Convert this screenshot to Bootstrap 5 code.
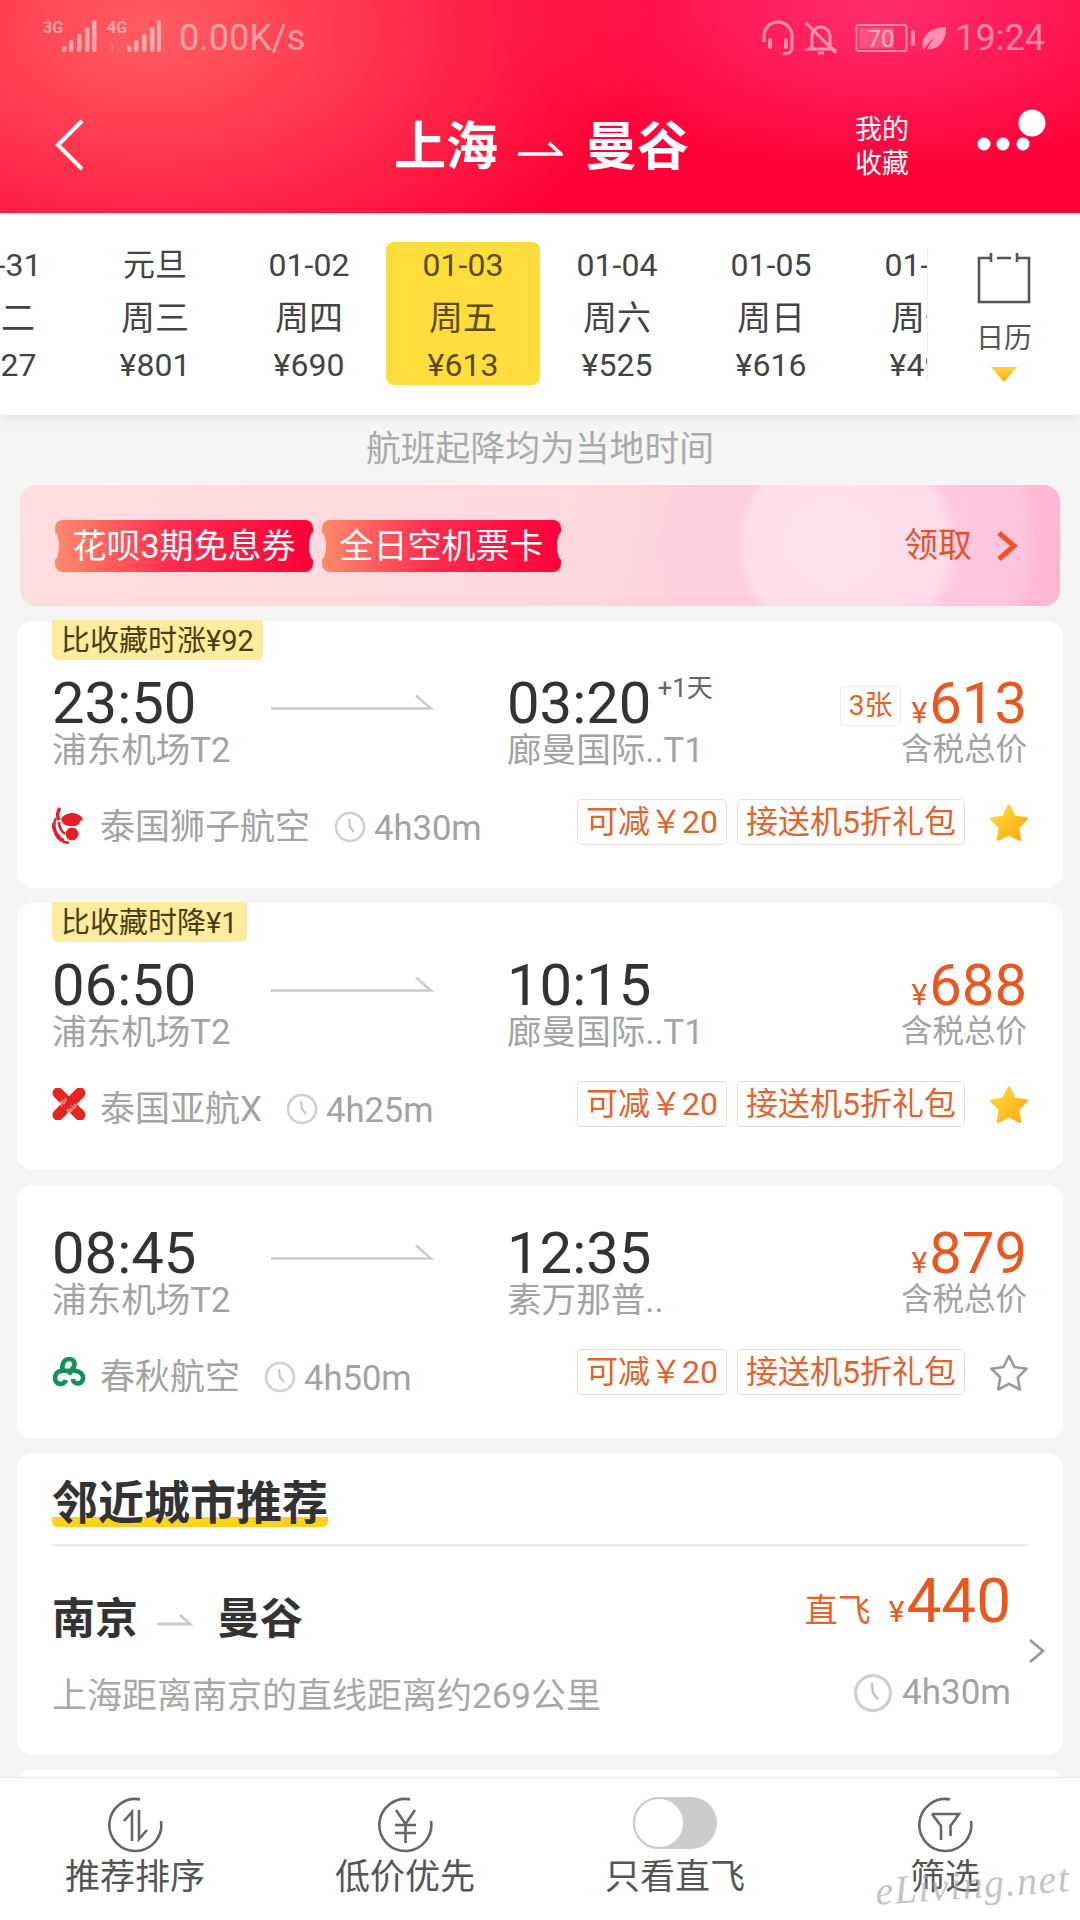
<!DOCTYPE html>
<html lang="zh">
<head>
<meta charset="utf-8">
<meta name="viewport" content="width=device-width, initial-scale=1">
<link rel="stylesheet" href="https://cdn.jsdelivr.net/npm/bootstrap@5.3.3/dist/css/bootstrap.min.css">
<script src="https://cdn.jsdelivr.net/npm/bootstrap@5.3.3/dist/js/bootstrap.bundle.min.js"></script>
<style>
  body { margin: 0; background: #f5f5f5; font-family: Roboto, "Noto Sans CJK SC", sans-serif; }
  svg { display: block; flex-shrink: 0; }

  .app { width: 1080px; height: 1920px; overflow: hidden; position: relative; background: #f5f5f5; }

  /* header */
  .hdr { height: 213px; color: #fff; flex-shrink: 0;
    background:
      radial-gradient(ellipse 500px 300px at 150px 30px, rgba(255,110,105,.85), rgba(255,0,54,0)),
      radial-gradient(ellipse 380px 170px at 880px 10px, rgba(255,50,115,.9), rgba(255,0,54,0)),
      #ff0036; }
  .stat { height: 76px; color: rgba(255,255,255,.48); font-size: 36px; padding: 0 35px 0 43px; }
  .stat-net { margin-left: 18px; }
  .nav-row { height: 137px; }
  .back-ico { margin-left: 55px; }
  .route-title { margin: 6px 0 0 309px; font-size: 52px; font-weight: 700; line-height: 60px; width: 400px; }
  .route-title svg { margin: 0 22px 0 20px; }
  .fav-link { margin: 4px 0 0 60px; font-size: 27px; line-height: 34px; width: 56px; text-align: center; }
  .dots-ico { margin: -14px 0 0 67px; }

  /* date strip */
  .date-bar { height: 202px; background: #fff; position: relative; z-index: 2; flex-shrink: 0;
    box-shadow: 0 5px 10px rgba(0,0,0,.06); }
  .date-scroll { width: 927px; overflow: hidden; padding-top: 29px; }
  .date-col { width: 154px; height: 143px; flex-shrink: 0; text-align: center; color: #444; border-radius: 8px; white-space: nowrap; }
  .date-col:first-child { margin-left: -76px; }
  .date-col.on { background: #ffdd3c; color: #5b4a0c; }
  .d1, .d3 { font-size: 32px; }
  .d1 { line-height: 46px; }
  .d2 { font-size: 34px; line-height: 60px; }
  .d3 { line-height: 34px; }
  .cal-col { width: 153px; height: 132px; margin-top: 35px; border-left: 1px solid #eee; padding-top: 4px; color: #555; }
  .cal-txt { font-size: 28px; line-height: 36px; margin-top: 17px; }
  .cal-tri { width: 26px; height: 15px; margin-top: 10px; flex-shrink: 0; background: linear-gradient(#ffd83a, #ffa514); clip-path: polygon(0 0, 100% 0, 50% 100%); }

  .hint { height: 70px; padding-bottom: 1px; font-size: 34.8px; color: #aaa; flex-shrink: 0; }

  /* promo */
  .promo { height: 121px; margin: 0 20px; padding: 0 42px 0 35px; border-radius: 16px; overflow: hidden; flex-shrink: 0;
    background:
      radial-gradient(circle at 827px 60px, rgba(255,235,245,.75) 0, rgba(255,228,240,.7) 100px, rgba(255,205,228,.6) 112px, rgba(255,205,228,.55) 178px, rgba(255,205,225,0) 190px),
      linear-gradient(100deg, #ffdde0, #ffd8de 55%, #ffc4d8 85%, #ffb6d2); }
  .chip { position: relative; height: 52px; overflow: hidden; color: #fff; font-size: 34px; line-height: 52px; border-radius: 8px; text-align: center;
    background: linear-gradient(90deg, #ff8a6c, #ff2e4e 45%, #ff003a); }
  .chip::before, .chip::after { content: ""; position: absolute; top: 12px; width: 10px; height: 28px; border-radius: 50%; background: #ffdbe0; }
  .chip::before { left: -6px; }
  .chip::after { right: -6px; }
  .chip-a { width: 258px; margin-right: 9px; }
  .chip-b { width: 239px; }
  .promo-get { font-size: 34px; color: #e8502a; }
  .promo-get svg { margin-left: 24px; }

  /* flight cards */
  .fl-card { margin: 15px 17px 0; border-radius: 16px; padding: 38px 36px 0 35px; flex-shrink: 0; height: 253px; }
  .fl-card.tagged { height: 267px; padding-top: 0; }
  .fav-tag { display: inline-block; height: 40px; line-height: 43px; padding: 0 9px; margin: -1px 0 13px 0; font-size: 29px; color: #4d3c0e; background: #fdeb9e; border-radius: 0 0 6px 6px; }
  .dep-col { width: 219px; }
  .leg-arrow { margin: 21px 73px 0 0; }
  .fl-time { font-size: 58px; line-height: 58px; color: #333; white-space: nowrap; margin: 1px 0 -1px; }
  .fl-port { font-size: 34.6px; line-height: 38px; color: #a3a3a3; white-space: nowrap; }
  .next-day { font-size: 26px; color: #666; vertical-align: 26px; line-height: 0; margin-left: 6px; }
  .price-col { margin-left: auto; text-align: right; }
  .price { font-size: 58px; line-height: 58px; height: 58px; color: #e8581f; white-space: nowrap; margin: 1px 0 -1px; }
  .price small { font-size: 30px; margin-right: 2px; }
  .seat-left { display: inline-block; font-size: 28px; line-height: 38px; padding: 0 8px; margin-right: 10px; color: #e0642c; border: 1px solid #eee; border-radius: 4px; vertical-align: 8px; }
  .tax-txt { font-size: 31.5px; line-height: 38px; color: #a3a3a3; }
  .air-row { margin-top: 30px; height: 46px; }
  .air-name { font-size: 35px; line-height: 46px; color: #a3a3a3; margin: 6px 24px 0 14px; white-space: nowrap; }
  .air-dur { font-size: 34.6px; line-height: 46px; color: #a3a3a3; margin: 6px 0 0 8px; }
  .clock-ico { margin-top: 12px; }
  .logo-ico { margin-top: 7px; }
  .coupon { font-size: 32px; line-height: 44px; height: 46px; padding: 0 8px; color: #e0642c; border: 1px solid #f5dcd2; border-radius: 5px; margin-left: 10px; white-space: nowrap; }
  .star-ico { margin: 0 -2px 0 24px; }

  /* nearby */
  .near-card { margin: 15px 17px 0; border-radius: 16px; height: 302px; padding: 26px 17px 0 35px; flex-shrink: 0; }
  .near-title { display: inline-block; font-size: 46px; line-height: 48px; font-weight: 700; color: #333; border-radius: 5px;
    background: linear-gradient(#ffd21f, #ffd21f) bottom / 100% 10px no-repeat; }
  .near-rule { height: 3px; background: #eee; margin: 17px 18px 0 0; }
  .near-body { height: 207px; }
  .near-route { font-size: 43px; font-weight: 700; line-height: 80px; color: #333; margin-top: 32px; }
  .near-route svg { margin: 0 24px 0 19px; }
  .near-sub { font-size: 35px; line-height: 40px; color: #a8a8a8; margin-top: 18px; white-space: nowrap; }
  .near-right { text-align: right; padding: 24px 17px 0 0; }
  .near-price { font-size: 62px; line-height: 60px; color: #e8581f; white-space: nowrap; }
  .near-price small { font-size: 30px; margin: 0 2px 0 18px; }
  .near-direct { font-size: 33px; color: #e8622c; }
  .near-dur { margin-top: 31px; height: 40px; font-size: 35px; line-height: 40px; color: #a3a3a3; }
  .near-dur svg { margin: 0 9px 0 auto; }
  .peek-card { margin: 15px 17px 0; height: 40px; border-radius: 16px; flex-shrink: 0; }

  /* bottom bar */
  .tab-bar { position: absolute; left: 0; right: 0; bottom: 0; height: 143px; background: #fff; border-top: 1px solid #e8e8e8; padding-top: 19px; z-index: 3; }
  .tab-item { width: 270px; color: #555; font-size: 35px; line-height: 44px; }
  .tab-ico { height: 59px; }
  .tab-toggle { width: 84px; height: 52px; border-radius: 26px; background: #ccc; position: relative; }
  .tab-toggle::before { content: ""; position: absolute; left: 0; top: 0; width: 52px; height: 52px; border-radius: 50%; background: #fff; border: 2px solid #ccc; }

  .wmark { position: absolute; left: 875px; top: 1855px; z-index: 4; font-family: "Liberation Serif", serif; font-style: italic; font-size: 40px; letter-spacing: 1.5px; color: rgba(170,170,170,.7); transform: rotate(-4deg); white-space: nowrap; }
</style>
</head>
<body>
<svg width="0" height="0" class="position-absolute">
  <defs>
    <linearGradient id="starFill" x1="0" y1="0" x2="1" y2="1">
      <stop offset="0" stop-color="#ffd93a"/><stop offset="1" stop-color="#ffac14"/>
    </linearGradient>
    <symbol id="clock" viewBox="0 0 32 32">
      <circle cx="16" cy="16" r="14" fill="none" stroke="#d0d0d0" stroke-width="2.6"/>
      <path d="M15 8l1 8 4 5" fill="none" stroke="#c4c4c4" stroke-width="2"/>
    </symbol>
    <symbol id="legArrow" viewBox="0 0 163 16">
      <path d="M0 14.5H160L145 1.5" fill="none" stroke="#ccc" stroke-width="2.6"/>
    </symbol>
    <symbol id="starOn" viewBox="0 0 40 38">
      <path d="M20 3l5.4 11 12.2 1.8-8.8 8.6 2 12.1L20 30.8 9.2 36.5l2-12.1L2.4 15.8 14.600 14z" fill="url(#starFill)" stroke="url(#starFill)" stroke-width="3" stroke-linejoin="round"/>
    </symbol>
    <symbol id="starOff" viewBox="0 0 40 38">
      <path d="M20 3l5.4 11 12.2 1.8-8.8 8.6 2 12.1L20 30.8 9.2 36.5l2-12.1L2.4 15.8 14.600 14z" fill="none" stroke="#9a9a9a" stroke-width="2.6" stroke-linejoin="round"/>
    </symbol>
    <symbol id="lion" viewBox="0 0 34 40">
      <path d="M8 2C5 6 5 10 7 14" fill="none" stroke="#e3202a" stroke-width="3.4"/>
      <path d="M9 13c3-6 13-8 18-4 2 1 3 2 4 5l-3 1c0 3-3 5-6 5h-5c-4 0-7-3-8-7z" fill="#e3202a"/>
      <circle cx="20" cy="28" r="6.500" fill="#e3202a"/>
      <path d="M4 12C1 18 2 26 8 31M1 17c0 8 4 15 11 17M3 27c2 5 6 9 14 10" fill="none" stroke="#e3202a" stroke-width="2.600"/>
      <path d="M7 16c0 5 2 9 6 12" fill="none" stroke="#e3202a" stroke-width="2.600"/>
    </symbol>
    <symbol id="airasia" viewBox="0 0 34 32">
      <path d="M6 5l22 22M28 5L6 27" stroke="#e3261f" stroke-width="11" stroke-linecap="round"/>
      <text x="13" y="15" font-size="7" font-style="italic" font-family="'Liberation Serif',serif" fill="#fff" text-anchor="middle" transform="rotate(-45 13 15)">Air</text>
      <text x="21" y="22" font-size="7" font-style="italic" font-family="'Liberation Serif',serif" fill="#fff" text-anchor="middle" transform="rotate(-45 21 22)">Asia</text>
    </symbol>
    <symbol id="spring" viewBox="0 0 34 32">
      <g fill="none" stroke="#14915a" stroke-width="4.600">
        <path d="M11 17C9 11 11 3 17 3c6 0 8 8 2 10"/>
        <path d="M16 15c7-2 16 1 15 8-1 6-10 6-10 0"/>
        <path d="M20 18C14 12 3 14 3 22c0 7 9 8 11 2"/>
      </g>
    </symbol>
    <symbol id="ring" viewBox="0 0 57 57">
      <path d="M33 2.400A26 26 0 1 0 54 24" fill="none" stroke="#666" stroke-width="2.600"/>
    </symbol>
  </defs>
</svg>

<div class="app d-flex flex-column">

  <div class="hdr">
    <div class="stat d-flex align-items-center">
      <svg width="118" height="44" viewBox="0 -4 118 44" fill="rgba(255,255,255,.48)">
        <text x="0" y="13" font-size="16" font-weight="700" font-family="Roboto,sans-serif">3G</text>
        <rect x="19" y="26" width="4.500" height="6" rx="2"/><rect x="26" y="20" width="4.500" height="12" rx="2"/><rect x="34" y="14" width="4.500" height="18" rx="2"/><rect x="42" y="7" width="4.500" height="25" rx="2"/><rect x="49" y="0" width="4.500" height="32" rx="2"/>
        <text x="64" y="13" font-size="16" font-weight="700" font-family="Roboto,sans-serif">4G</text>
        <text x="66" y="31" font-size="11" fill="rgba(255,255,255,.22)" font-family="Roboto,sans-serif">1↓</text>
        <rect x="84" y="26" width="4.500" height="6" rx="2"/><rect x="91" y="20" width="4.500" height="12" rx="2"/><rect x="99" y="14" width="4.500" height="18" rx="2"/><rect x="107" y="7" width="4.500" height="25" rx="2"/><rect x="114" y="0" width="4" height="32" rx="2"/>
      </svg>
      <span class="stat-net">0.00K/s</span>
      <div class="ms-auto d-flex align-items-center">
        <svg width="34" height="36" viewBox="0 0 34 36" fill="none" stroke="rgba(255,255,255,.5)" stroke-width="3">
          <path d="M3 22V16a14 14 0 0 1 28 0v6"/><rect x="7" y="18" width="4" height="11" rx="2" fill="rgba(255,255,255,.5)" stroke="none"/><rect x="23" y="18" width="4" height="11" rx="2" fill="rgba(255,255,255,.5)" stroke="none"/><path d="M31 22v6c0 4-4 6-9 6"/>
        </svg>
        <svg class="ms-2" width="36" height="36" viewBox="0 0 36 36" fill="none" stroke="rgba(255,255,255,.5)" stroke-width="3">
          <path d="M9 27V16c0-5 4-9 9-9s9 4 9 9v11l3 2H6zM15 33h6M3 3l30 30"/>
        </svg>
        <svg class="ms-3" width="66" height="32" viewBox="0 0 66 32">
          <rect x="1.500" y="3" width="50" height="26" rx="2" fill="none" stroke="rgba(255,255,255,.45)" stroke-width="2"/>
          <rect x="4" y="5.500" width="35" height="21" fill="rgba(255,255,255,.2)"/>
          <text x="26" y="25" font-size="24" fill="rgba(255,255,255,.55)" text-anchor="middle" font-family="Roboto,sans-serif">70</text>
          <rect x="56" y="8" width="4" height="16" rx="2" fill="rgba(255,255,255,.45)"/>
        </svg>
        <svg width="26" height="32" viewBox="0 0 26 32" class="me-2">
          <path d="M2 28C-1 14 8 6 25 5c1 13-8 24-19 22L14 14z" fill="rgba(255,255,255,.5)"/>
        </svg>
        <span>19:24</span>
      </div>
    </div>
    <div class="nav-row d-flex align-items-center">
      <svg class="back-ico" width="30" height="52" viewBox="0 0 30 52"><path d="M27 2L3 26l24 24" fill="none" stroke="#fff" stroke-width="4"/></svg>
      <div class="route-title d-flex align-items-center">
        <span>上海</span>
        <svg width="45" height="16" viewBox="0 0 45 16"><path d="M0 14H43L31 3" fill="none" stroke="#fff" stroke-width="3.500"/></svg>
        <span>曼谷</span>
      </div>
      <div class="fav-link">我的收藏</div>
      <svg class="dots-ico" width="76" height="60" viewBox="0 0 76 60" fill="#fff">
        <circle cx="7" cy="36" r="6.500"/><circle cx="26" cy="36" r="6.500"/><circle cx="46" cy="36" r="6.500"/><circle cx="55" cy="15" r="13.500"/>
      </svg>
    </div>
  </div>

  <div class="date-bar d-flex">
    <div class="date-scroll d-flex">
      <div class="date-col"><div class="d1">12-31</div><div class="d2">周二</div><div class="d3">¥727</div></div>
      <div class="date-col"><div class="d1">元旦</div><div class="d2">周三</div><div class="d3">¥801</div></div>
      <div class="date-col"><div class="d1">01-02</div><div class="d2">周四</div><div class="d3">¥690</div></div>
      <div class="date-col on"><div class="d1">01-03</div><div class="d2">周五</div><div class="d3">¥613</div></div>
      <div class="date-col"><div class="d1">01-04</div><div class="d2">周六</div><div class="d3">¥525</div></div>
      <div class="date-col"><div class="d1">01-05</div><div class="d2">周日</div><div class="d3">¥616</div></div>
      <div class="date-col"><div class="d1">01-06</div><div class="d2">周一</div><div class="d3">¥498</div></div>
    </div>
    <div class="cal-col d-flex flex-column align-items-center">
      <svg width="54" height="52" viewBox="0 0 54 52" fill="none" stroke="#555" stroke-width="2.600">
        <path d="M14 6H2v44h50V6H40M20 6h14M14 1v9M40 1v9"/>
      </svg>
      <div class="cal-txt">日历</div>
      <div class="cal-tri"></div>
    </div>
  </div>

  <div class="hint d-flex align-items-center justify-content-center">航班起降均为当地时间</div>

  <div class="promo d-flex align-items-center">
    <div class="chip chip-a">花呗3期免息券</div>
    <div class="chip chip-b">全日空机票卡</div>
    <div class="promo-get ms-auto d-flex align-items-center">领取
      <svg width="22" height="32" viewBox="0 0 22 32"><path d="M3 3l15 13L3 29" fill="none" stroke="#ee5028" stroke-width="5"/></svg>
    </div>
  </div>

  <div class="card border-0 fl-card tagged">
    <div><span class="fav-tag">比收藏时涨¥92</span></div>
    <div class="d-flex">
      <div class="dep-col"><div class="fl-time">23:50</div><div class="fl-port">浦东机场T2</div></div>
      <svg class="leg-arrow" width="163" height="16"><use href="#legArrow"/></svg>
      <div><div class="fl-time">03:20<span class="next-day">+1天</span></div><div class="fl-port">廊曼国际..T1</div></div>
      <div class="price-col"><div class="price"><span class="seat-left">3张</span><small>¥</small>613</div><div class="tax-txt">含税总价</div></div>
    </div>
    <div class="air-row d-flex align-items-start">
      <svg class="logo-ico" width="34" height="40"><use href="#lion"/></svg>
      <span class="air-name">泰国狮子航空</span>
      <svg class="clock-ico" width="32" height="32"><use href="#clock"/></svg>
      <span class="air-dur">4h30m</span>
      <div class="ms-auto d-flex align-items-center">
        <span class="coupon">可减￥20</span><span class="coupon">接送机5折礼包</span>
        <svg class="star-ico" width="40" height="38"><use href="#starOn"/></svg>
      </div>
    </div>
  </div>

  <div class="card border-0 fl-card tagged">
    <div><span class="fav-tag">比收藏时降¥1</span></div>
    <div class="d-flex">
      <div class="dep-col"><div class="fl-time">06:50</div><div class="fl-port">浦东机场T2</div></div>
      <svg class="leg-arrow" width="163" height="16"><use href="#legArrow"/></svg>
      <div><div class="fl-time">10:15</div><div class="fl-port">廊曼国际..T1</div></div>
      <div class="price-col"><div class="price"><small>¥</small>688</div><div class="tax-txt">含税总价</div></div>
    </div>
    <div class="air-row d-flex align-items-start">
      <svg class="logo-ico" width="34" height="32"><use href="#airasia"/></svg>
      <span class="air-name">泰国亚航X</span>
      <svg class="clock-ico" width="32" height="32"><use href="#clock"/></svg>
      <span class="air-dur">4h25m</span>
      <div class="ms-auto d-flex align-items-center">
        <span class="coupon">可减￥20</span><span class="coupon">接送机5折礼包</span>
        <svg class="star-ico" width="40" height="38"><use href="#starOn"/></svg>
      </div>
    </div>
  </div>

  <div class="card border-0 fl-card">
    <div class="d-flex">
      <div class="dep-col"><div class="fl-time">08:45</div><div class="fl-port">浦东机场T2</div></div>
      <svg class="leg-arrow" width="163" height="16"><use href="#legArrow"/></svg>
      <div><div class="fl-time">12:35</div><div class="fl-port">素万那普..</div></div>
      <div class="price-col"><div class="price"><small>¥</small>879</div><div class="tax-txt">含税总价</div></div>
    </div>
    <div class="air-row d-flex align-items-start">
      <svg class="logo-ico" width="34" height="32"><use href="#spring"/></svg>
      <span class="air-name">春秋航空</span>
      <svg class="clock-ico" width="32" height="32"><use href="#clock"/></svg>
      <span class="air-dur">4h50m</span>
      <div class="ms-auto d-flex align-items-center">
        <span class="coupon">可减￥20</span><span class="coupon">接送机5折礼包</span>
        <svg class="star-ico" width="40" height="38"><use href="#starOff"/></svg>
      </div>
    </div>
  </div>

  <div class="card border-0 near-card">
    <div><span class="near-title">邻近城市推荐</span></div>
    <div class="near-rule"></div>
    <div class="near-body d-flex align-items-center">
      <div class="flex-grow-1 align-self-start">
        <div class="near-route d-flex align-items-center">
          <span>南京</span>
          <svg width="36" height="14" viewBox="0 0 36 14"><path d="M0 12H33L23 3" fill="none" stroke="#ccc" stroke-width="3"/></svg>
          <span>曼谷</span>
        </div>
        <div class="near-sub">上海距离南京的直线距离约269公里</div>
      </div>
      <div class="near-right align-self-start">
        <div class="near-price"><span class="near-direct">直飞</span><small>¥</small>440</div>
        <div class="near-dur d-flex align-items-center">
          <svg width="40" height="40"><use href="#clock"/></svg>
          <span>4h30m</span>
        </div>
      </div>
      <svg width="18" height="26" viewBox="0 0 18 26"><path d="M2 2l13 11L2 24" fill="none" stroke="#999" stroke-width="2.800"/></svg>
    </div>
  </div>

  <div class="card border-0 peek-card"></div>

  <div class="tab-bar d-flex">
    <div class="tab-item d-flex flex-column align-items-center">
      <div class="tab-ico">
        <svg width="57" height="57" viewBox="0 0 57 57" fill="none" stroke="#666" stroke-width="2.600">
          <use href="#ring"/>
          <path d="M17 24l8-9v29M32 13v29l8-9"/>
        </svg>
      </div>
      <span>推荐排序</span>
    </div>
    <div class="tab-item d-flex flex-column align-items-center">
      <div class="tab-ico">
        <svg width="57" height="57" viewBox="0 0 57 57" fill="none" stroke="#666" stroke-width="2.600">
          <use href="#ring"/>
          <path d="M19 13l9.500 14L38 13M18 28h21M18 36h21M28.500 27v19"/>
        </svg>
      </div>
      <span>低价优先</span>
    </div>
    <div class="tab-item d-flex flex-column align-items-center">
      <div class="tab-ico"><div class="tab-toggle"></div></div>
      <span>只看直飞</span>
    </div>
    <div class="tab-item d-flex flex-column align-items-center">
      <div class="tab-ico">
        <svg width="57" height="57" viewBox="0 0 57 57" fill="none" stroke="#666" stroke-width="2.600">
          <use href="#ring"/>
          <path d="M15 17h27l-8.500 12v10M15 17l9 12v14"/>
        </svg>
      </div>
      <span>筛选</span>
    </div>
  </div>

  <div class="wmark">eLiving.net</div>
</div>
</body>
</html>
